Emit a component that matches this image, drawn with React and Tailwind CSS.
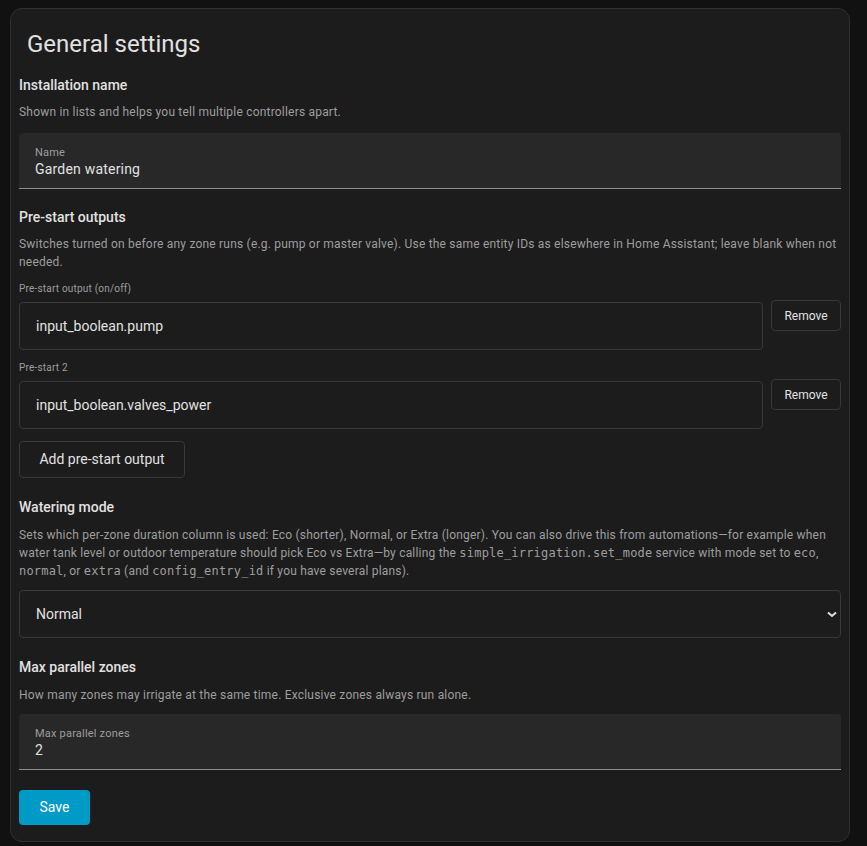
import React, { useState } from 'react'

const mono = "font-['DejaVu_Sans_Mono',monospace] text-[12px] tracking-[0.2px]"

const FilledField = ({ label, value }) => (
  <div className="h-[56px] rounded-t bg-[#282828] border-b border-[#8c8c8c] px-4 pt-[13px]">
    <div className="text-[11px] leading-[14px] tracking-[0.2px] text-[#9e9e9e]">{label}</div>
    <div className="text-[14px] leading-[20px] tracking-[0.2px] text-[#e1e1e1] mt-[-1px]">{value}</div>
  </div>
)

const SectionTitle = ({ children, className = '' }) => (
  <h2 className={`text-[14px] leading-[20px] font-medium text-[#e1e1e1] ${className}`}>{children}</h2>
)

const Desc = ({ children, className = '' }) => (
  <p className={`text-[12px] leading-[18px] tracking-[0.2px] text-[#9e9e9e] ${className}`}>{children}</p>
)

const PreStartRow = ({ label, value, onRemove }) => (
  <div>
    <div className="text-[10px] leading-[14px] tracking-[0.2px] text-[#9e9e9e]">{label}</div>
    <div className="flex items-start gap-2 mt-[6px]">
      <div className="flex-1 h-[48px] rounded border border-[#383838] bg-[#1c1c1c] flex items-center px-4 text-[14px] text-[#e1e1e1]">
        {value}
      </div>
      <button
        onClick={onRemove}
        className="mt-[-2px] h-[31px] w-[70px] rounded border border-[#383838] bg-[#1c1c1c] text-[12px] text-[#e1e1e1]"
      >
        Remove
      </button>
    </div>
  </div>
)

export default function App() {
  const [outputs] = useState([
    { label: 'Pre-start output (on/off)', value: 'input_boolean.pump' },
    { label: 'Pre-start 2', value: 'input_boolean.valves_power' },
  ])

  return (
    <div className="min-h-[846px] bg-[#111111] pt-2 pl-[10px] font-['Roboto',sans-serif]">
      <div className="w-[840px] h-[834px] rounded-xl border border-[#303030] bg-[#1c1c1c] px-2">
        <h1 className="text-[24px] leading-[48px] text-[#e1e1e1] px-2 pt-[11px]">General settings</h1>

        {/* Installation name */}
        <SectionTitle className="mt-[7px]">Installation name</SectionTitle>
        <Desc className="mt-[8px]">Shown in lists and helps you tell multiple controllers apart.</Desc>
        <div className="mt-[12px]">
          <FilledField label="Name" value="Garden watering" />
        </div>

        {/* Pre-start outputs */}
        <SectionTitle className="mt-[18px]">Pre-start outputs</SectionTitle>
        <Desc className="mt-[8px]">
          Switches turned on before any zone runs (e.g. pump or master valve). Use the same entity IDs as elsewhere in Home Assistant; leave blank when not needed.
        </Desc>
        <div className="mt-[11px] flex flex-col gap-[11px]">
          {outputs.map((o) => (
            <PreStartRow key={o.label} label={o.label} value={o.value} />
          ))}
        </div>
        <button className="mt-[12px] h-[37px] w-[166px] rounded border border-[#383838] bg-[#1c1c1c] text-[14px] text-[#e1e1e1]">
          Add pre-start output
        </button>

        {/* Watering mode */}
        <SectionTitle className="mt-[19px]">Watering mode</SectionTitle>
        <Desc className="mt-[9px]">
          Sets which per-zone duration column is used: Eco (shorter), Normal, or Extra (longer). You can also drive this from automations—for example when water tank level or outdoor temperature should pick Eco vs Extra—by calling the{' '}
          <code className={mono}>simple_irrigation.set_mode</code> service with mode set to{' '}
          <code className={mono}>eco</code>, <code className={mono}>normal</code>, or{' '}
          <code className={mono}>extra</code> (and <code className={mono}>config_entry_id</code> if you have several plans).
        </Desc>
        <div className="mt-[10px] h-[48px] rounded border border-[#383838] bg-[#1c1c1c] flex items-center justify-between pl-4 pr-[3px] text-[14px] text-[#e1e1e1]">
          <span>Normal</span>
          <svg width="10" height="7" viewBox="0 0 10 7">
            <path d="M1 1.5 L5 5 L9 1.5" fill="none" stroke="#e1e1e1" strokeWidth="2" />
          </svg>
        </div>

        {/* Max parallel zones */}
        <SectionTitle className="mt-[19px]">Max parallel zones</SectionTitle>
        <Desc className="mt-[9px]">How many zones may irrigate at the same time. Exclusive zones always run alone.</Desc>
        <div className="mt-[10px]">
          <FilledField label="Max parallel zones" value="2" />
        </div>

        <button className="mt-[20px] h-[35px] w-[71px] rounded bg-[#009ac7] text-[14px] text-white">Save</button>
      </div>
    </div>
  )
}
